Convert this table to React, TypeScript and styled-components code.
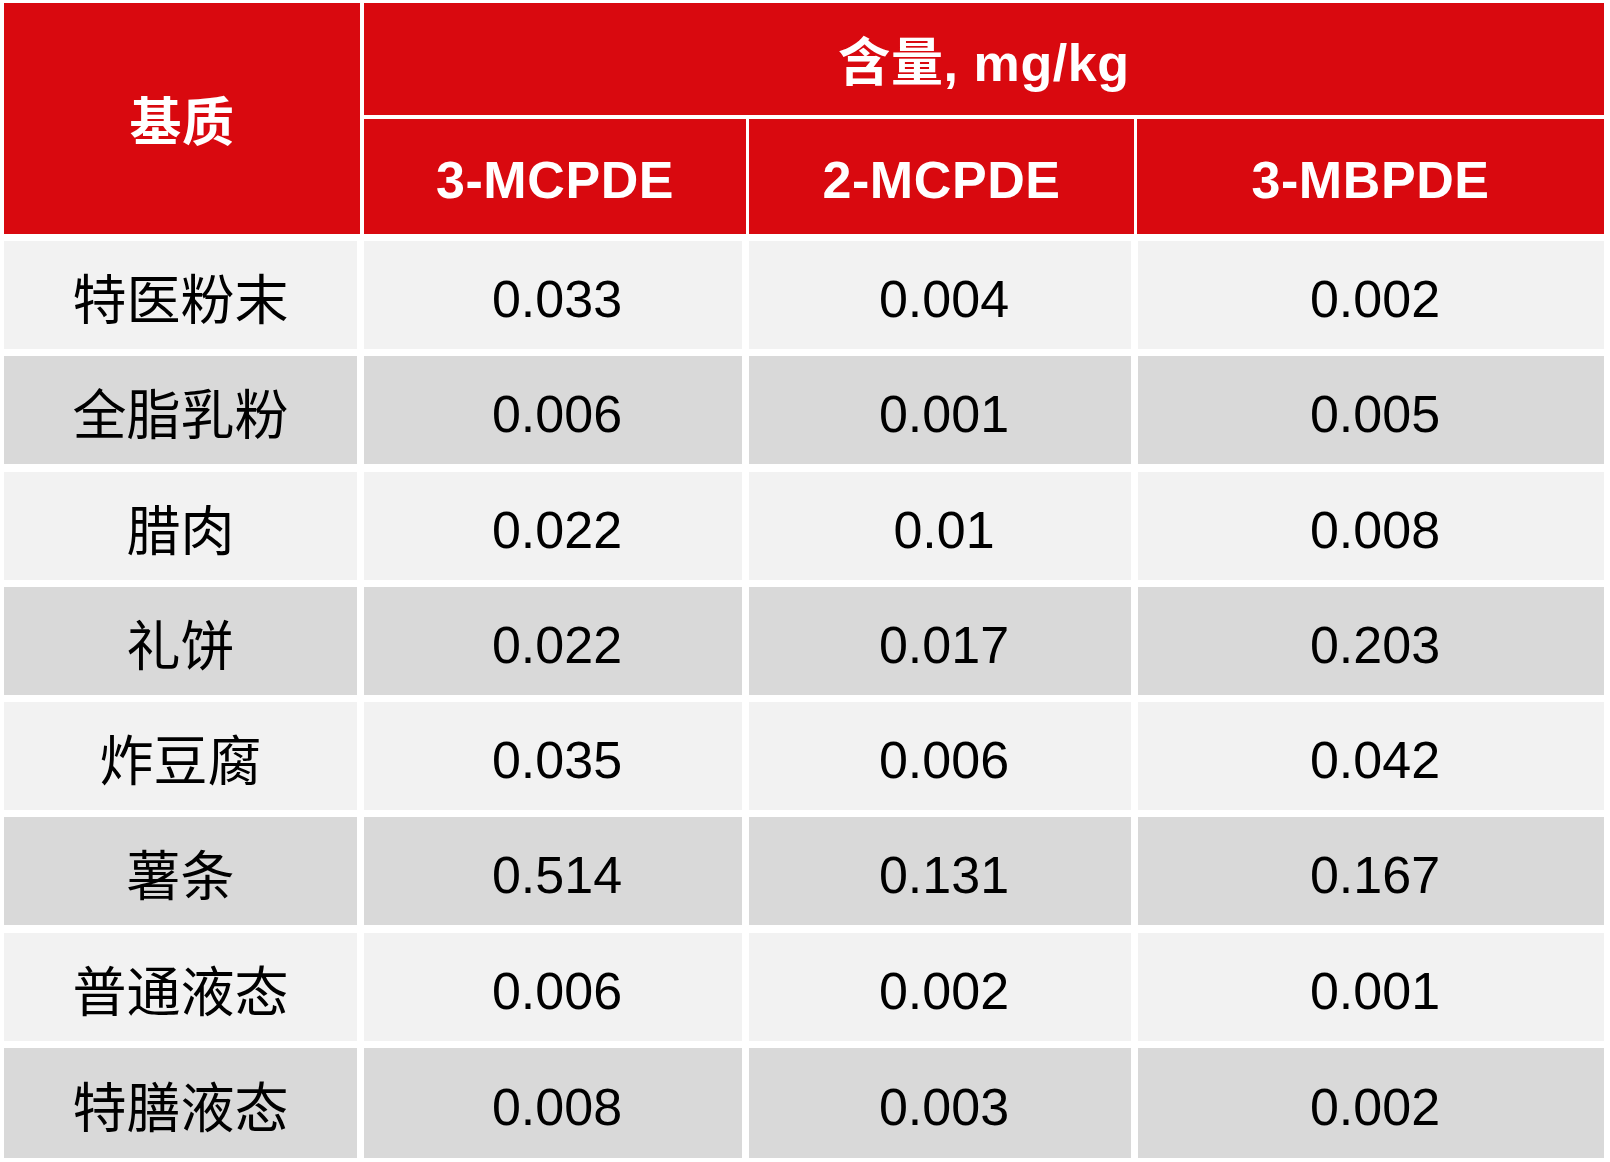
import React from 'react';
import styled, { createGlobalStyle } from 'styled-components';

// Data for the table
interface Row {
  matrix: string;
  mcpde3: string;
  mcpde2: string;
  mbpde3: string;
}

const rows: Row[] = [
  { matrix: '特医粉末', mcpde3: '0.033', mcpde2: '0.004', mbpde3: '0.002' },
  { matrix: '全脂乳粉', mcpde3: '0.006', mcpde2: '0.001', mbpde3: '0.005' },
  { matrix: '腊肉', mcpde3: '0.022', mcpde2: '0.01', mbpde3: '0.008' },
  { matrix: '礼饼', mcpde3: '0.022', mcpde2: '0.017', mbpde3: '0.203' },
  { matrix: '炸豆腐', mcpde3: '0.035', mcpde2: '0.006', mbpde3: '0.042' },
  { matrix: '薯条', mcpde3: '0.514', mcpde2: '0.131', mbpde3: '0.167' },
  { matrix: '普通液态', mcpde3: '0.006', mcpde2: '0.002', mbpde3: '0.001' },
  { matrix: '特膳液态', mcpde3: '0.008', mcpde2: '0.003', mbpde3: '0.002' },
];

const columns = ['3-MCPDE', '2-MCPDE', '3-MBPDE'];

const GlobalStyle = createGlobalStyle`
  html, body {
    margin: 0;
    padding: 0;
    background: #ffffff;
  }
  body {
    font-family: "Liberation Sans", "Noto Sans CJK SC", sans-serif;
  }
`;

const Page = styled.div`
  padding: 3px 0 0 4px;
  width: 1606px;
`;

// Header
const Header = styled.div`
  display: grid;
  grid-template-columns: 356px 1240px;
  column-gap: 4px;
  height: 231px;
  background: #ffffff;
`;

const HeaderCell = styled.div<{ $shift?: number }>`
  display: flex;
  align-items: center;
  justify-content: center;
  padding-top: ${({ $shift }) => $shift ?? 0}px;
  background: #d9090f;
  color: #ffffff;
  font-weight: 700;
  font-size: 52px;
  letter-spacing: 0.6px;
  font-family: "Liberation Sans", "Noto Sans CJK SC", sans-serif;
  line-height: 1;
`;

const HeaderRight = styled.div`
  display: grid;
  grid-template-rows: 112px 115px;
  row-gap: 4px;
`;

const SubHeader = styled.div`
  display: grid;
  grid-template-columns: 382px 385px 467px;
  column-gap: 3px;
`;

// Body
const Body = styled.div`
  display: flex;
  flex-direction: column;
  gap: 7.3px;
  margin-top: 7px;
`;

const BodyRow = styled.div<{ $dark: boolean; $last?: boolean }>`
  display: grid;
  grid-template-columns: 353px 378px 382px 466px;
  column-gap: 7px;
  height: ${({ $last }) => ($last ? '110px' : '108px')};

  & > div {
    background: ${({ $dark }) => ($dark ? '#d9d9d9' : '#f2f2f2')};
  }
`;

const Cell = styled.div`
  display: flex;
  align-items: center;
  justify-content: center;
  padding: 8px 0 0 8px;
  color: #000000;
  font-size: 52px;
  line-height: 1;
`;

const MatrixCell = styled(Cell)`
  font-family: "Noto Sans CJK SC", sans-serif;
  font-size: 54px;
  padding: 4px 0 0 0;
`;

const App: React.FC = () => {
  return (
    <Page>
      <GlobalStyle />
      <Header>
        <HeaderCell $shift={9}>基质</HeaderCell>
        <HeaderRight>
          <HeaderCell $shift={7}>含量, mg/kg</HeaderCell>
          <SubHeader>
            {columns.map((c) => (
              <HeaderCell key={c} $shift={6}>{c}</HeaderCell>
            ))}
          </SubHeader>
        </HeaderRight>
      </Header>
      <Body>
        {rows.map((r, i) => (
          <BodyRow key={r.matrix} $dark={i % 2 === 1} $last={i === rows.length - 1}>
            <MatrixCell>{r.matrix}</MatrixCell>
            <Cell>{r.mcpde3}</Cell>
            <Cell>{r.mcpde2}</Cell>
            <Cell>{r.mbpde3}</Cell>
          </BodyRow>
        ))}
      </Body>
    </Page>
  );
};

export default App;
